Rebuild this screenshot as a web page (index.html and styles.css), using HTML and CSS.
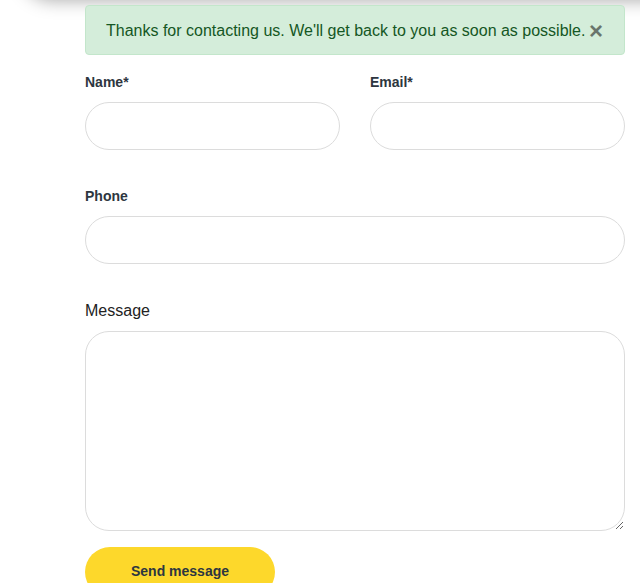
FILE: index.html
```html
<!DOCTYPE html>
<html lang="en">
<head>
<meta charset="utf-8">
<title>Contact</title>
<link rel="stylesheet" href="styles.css">
</head>
<body>
<div class="header-shadow"></div>
<main class="contact">
  <div class="alert">
    <span class="alert-text">Thanks for contacting us. We'll get back to you as soon as possible.</span>
    <button class="alert-close" type="button" aria-label="Close">&times;</button>
  </div>
  <form class="form">
    <div class="row">
      <div class="field">
        <label class="label" for="name">Name*</label>
        <input class="input" id="name" type="text">
      </div>
      <div class="field">
        <label class="label" for="email">Email*</label>
        <input class="input" id="email" type="email">
      </div>
    </div>
    <div class="field">
      <label class="label" for="phone">Phone</label>
      <input class="input" id="phone" type="tel">
    </div>
    <div class="field">
      <label class="label label-plain" for="message">Message</label>
      <textarea class="textarea" id="message"></textarea>
    </div>
    <button class="submit" type="submit">Send message</button>
  </form>
</main>
</body>
</html>
```

FILE: styles.css
```css
html, body {
  margin: 0;
  padding: 0;
  background: #fff;
  overflow: hidden;
}
body {
  font-family: "Liberation Sans", Arial, Helvetica, sans-serif;
  color: #222;
  position: relative;
  height: 583px;
}
.header-shadow {
  position: absolute;
  top: -60px;
  left: 22px;
  right: -40px;
  height: 60px;
  background: #fff;
  border-radius: 0 0 0 30px;
  box-shadow: 0 0 18px rgba(0, 0, 0, 0.35);
}
.contact {
  width: 540px;
  margin-left: 85px;
  padding-top: 5px;
}
.alert {
  position: relative;
  box-sizing: border-box;
  height: 50px;
  padding: 13px 0 11px 20px;
  background: #d4edda;
  border: 1px solid #c3e6cb;
  border-radius: 4px;
  color: #155724;
  font-size: 16px;
  line-height: 24px;
  white-space: nowrap;
}
.alert-close {
  position: absolute;
  top: 1px;
  right: 0;
  height: 48px;
  padding: 0 21px 0 0;
  background: none;
  border: 0;
  font-family: "Liberation Sans", Arial, sans-serif;
  font-size: 24px;
  font-weight: 700;
  line-height: 48px;
  color: #000;
  opacity: 0.5;
}
.form {
  display: flex;
  flex-direction: column;
  gap: 36px;
  padding-top: 17px;
}
.row {
  display: flex;
  gap: 30px;
}
.row .field {
  flex: 1;
}
.field {
  display: flex;
  flex-direction: column;
  gap: 10px;
}
.label {
  font-size: 14px;
  font-weight: 700;
  line-height: 20px;
  color: #2d3640;
}
.label-plain {
  font-size: 16px;
  font-weight: 400;
  line-height: 21px;
  color: #222;
}
.input {
  box-sizing: border-box;
  width: 100%;
  height: 48px;
  margin: 0;
  padding: 0 20px;
  border: 1px solid #dcdcdc;
  border-radius: 24px;
  background: #fff;
  font: inherit;
  font-size: 16px;
}
.textarea {
  box-sizing: border-box;
  width: 100%;
  height: 200px;
  margin: 0;
  padding: 14px 20px;
  border: 1px solid #dcdcdc;
  border-radius: 24px;
  background: #fff;
  font: inherit;
  font-size: 16px;
}
.submit {
  align-self: flex-start;
  width: 190px;
  height: 50px;
  margin-top: -20px;
  border: 0;
  border-radius: 25px;
  background: #fdd82b;
  color: #2d3640;
  font-family: "Liberation Sans", Arial, sans-serif;
  font-size: 14px;
  font-weight: 700;
  padding: 0 0 2px;
}
```
